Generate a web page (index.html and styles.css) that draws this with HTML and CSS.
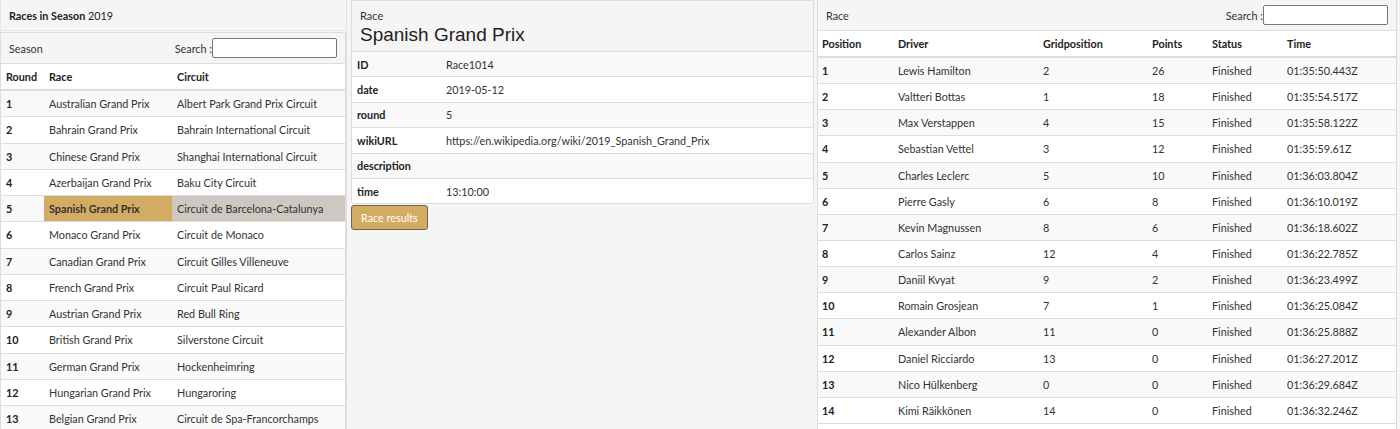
FILE: index.html
```html
<!DOCTYPE html>
<html>
<head>
<meta charset="utf-8">
<link rel="stylesheet" href="styles.css">
</head>
<body>
<div class="page">
  <section class="col col-left">
    <div class="panel-head"><b>Races in Season</b> 2019</div>
    <div class="card">
      <div class="bar">
        <span>Season</span>
        <label class="search">Search :<input type="text"></label>
      </div>
      <table class="grid races">
        <thead><tr><th class="c-round">Round</th><th class="c-race">Race</th><th>Circuit</th></tr></thead>
        <tbody>
          <tr><td>1</td><td>Australian Grand Prix</td><td>Albert Park Grand Prix Circuit</td></tr>
          <tr><td>2</td><td>Bahrain Grand Prix</td><td>Bahrain International Circuit</td></tr>
          <tr><td>3</td><td>Chinese Grand Prix</td><td>Shanghai International Circuit</td></tr>
          <tr><td>4</td><td>Azerbaijan Grand Prix</td><td>Baku City Circuit</td></tr>
          <tr class="selected"><td>5</td><td class="sel-main">Spanish Grand Prix</td><td class="sel-sub">Circuit de Barcelona-Catalunya</td></tr>
          <tr><td>6</td><td>Monaco Grand Prix</td><td>Circuit de Monaco</td></tr>
          <tr><td>7</td><td>Canadian Grand Prix</td><td>Circuit Gilles Villeneuve</td></tr>
          <tr><td>8</td><td>French Grand Prix</td><td>Circuit Paul Ricard</td></tr>
          <tr><td>9</td><td>Austrian Grand Prix</td><td>Red Bull Ring</td></tr>
          <tr><td>10</td><td>British Grand Prix</td><td>Silverstone Circuit</td></tr>
          <tr><td>11</td><td>German Grand Prix</td><td>Hockenheimring</td></tr>
          <tr><td>12</td><td>Hungarian Grand Prix</td><td>Hungaroring</td></tr>
          <tr><td>13</td><td>Belgian Grand Prix</td><td>Circuit de Spa-Francorchamps</td></tr>
        </tbody>
      </table>
    </div>
  </section>

  <section class="col col-mid">
    <div class="detail">
      <div class="detail-head">
        <div class="small">Race</div>
        <div class="title">Spanish Grand Prix</div>
      </div>
      <table class="grid props">
        <tbody>
          <tr><td class="c-key">ID</td><td>Race1014</td></tr>
          <tr><td class="c-key">date</td><td>2019-05-12</td></tr>
          <tr><td class="c-key">round</td><td>5</td></tr>
          <tr><td class="c-key">wikiURL</td><td>https://en.wikipedia.org/wiki/2019_Spanish_Grand_Prix</td></tr>
          <tr><td class="c-key">description</td><td></td></tr>
          <tr><td class="c-key">time</td><td>13:10:00</td></tr>
        </tbody>
      </table>
    </div>
    <button class="btn">Race results</button>
  </section>

  <section class="col col-right">
    <div class="bar bar-right">
      <span>Race</span>
      <label class="search">Search :<input type="text"></label>
    </div>
    <table class="grid results">
      <thead><tr><th class="c-pos">Position</th><th class="c-drv">Driver</th><th class="c-grid">Gridposition</th><th class="c-pts">Points</th><th class="c-st">Status</th><th>Time</th></tr></thead>
      <tbody>
        <tr><td>1</td><td>Lewis Hamilton</td><td>2</td><td>26</td><td>Finished</td><td>01:35:50.443Z</td></tr>
        <tr><td>2</td><td>Valtteri Bottas</td><td>1</td><td>18</td><td>Finished</td><td>01:35:54.517Z</td></tr>
        <tr><td>3</td><td>Max Verstappen</td><td>4</td><td>15</td><td>Finished</td><td>01:35:58.122Z</td></tr>
        <tr><td>4</td><td>Sebastian Vettel</td><td>3</td><td>12</td><td>Finished</td><td>01:35:59.61Z</td></tr>
        <tr><td>5</td><td>Charles Leclerc</td><td>5</td><td>10</td><td>Finished</td><td>01:36:03.804Z</td></tr>
        <tr><td>6</td><td>Pierre Gasly</td><td>6</td><td>8</td><td>Finished</td><td>01:36:10.019Z</td></tr>
        <tr><td>7</td><td>Kevin Magnussen</td><td>8</td><td>6</td><td>Finished</td><td>01:36:18.602Z</td></tr>
        <tr><td>8</td><td>Carlos Sainz</td><td>12</td><td>4</td><td>Finished</td><td>01:36:22.785Z</td></tr>
        <tr><td>9</td><td>Daniil Kvyat</td><td>9</td><td>2</td><td>Finished</td><td>01:36:23.499Z</td></tr>
        <tr><td>10</td><td>Romain Grosjean</td><td>7</td><td>1</td><td>Finished</td><td>01:36:25.084Z</td></tr>
        <tr><td>11</td><td>Alexander Albon</td><td>11</td><td>0</td><td>Finished</td><td>01:36:25.888Z</td></tr>
        <tr><td>12</td><td>Daniel Ricciardo</td><td>13</td><td>0</td><td>Finished</td><td>01:36:27.201Z</td></tr>
        <tr><td>13</td><td>Nico Hülkenberg</td><td>0</td><td>0</td><td>Finished</td><td>01:36:29.684Z</td></tr>
        <tr><td>14</td><td>Kimi Räikkönen</td><td>14</td><td>0</td><td>Finished</td><td>01:36:32.246Z</td></tr>
      </tbody>
    </table>
  </section>
</div>
</body>
</html>
```

FILE: styles.css
```css
html, body {
  margin: 0;
  padding: 0;
  background: #f5f5f5;
  font-family: "Lato", "Noto Sans", sans-serif;
  font-size: 10.8px;
  color: #333;
}
.page {
  display: flex;
  align-items: flex-start;
  height: 429px;
  overflow: hidden;
}
.col { box-sizing: border-box; flex: none; }
.col-left { width: 347px; }
.col-mid { width: 463px; margin-left: 4px; }
.col-right {
  width: 580px;
  margin-left: 3px;
  align-self: stretch;
  border-left: 1px solid #ddd;
  border-right: 1px solid #ddd;
  background: #fff;
}

.panel-head {
  height: 31px;
  box-sizing: border-box;
  padding: 9px 8px 0;
  border: 1px solid #e6e6e6;
  border-top: 0;
  background: #f5f5f5;
  color: #222;
}
.panel-head b { font-weight: 700; }

.card {
  margin-top: 1px;
  border: 1px solid #ddd;
  border-right-width: 2px;
  background: #fff;
}
.bar {
  display: flex;
  align-items: center;
  justify-content: space-between;
  height: 31px;
  box-sizing: border-box;
  padding: 0 8px;
  background: #f5f5f5;
  border-bottom: 1px solid #ddd;
}
.search { display: flex; align-items: center; }
.search input {
  width: 125px;
  height: 20px;
  box-sizing: border-box;
  margin: 0;
  border: 1px solid #767676;
  border-radius: 2px;
  background: #fff;
  padding: 0 3px;
}

.grid {
  width: 100%;
  border-collapse: collapse;
}
.grid th {
  text-align: left;
  font-weight: 700;
  color: #222;
  height: 24px;
  padding: 0 5px;
  border-bottom: 2px solid #ddd;
  background: #fff;
}
.grid td {
  height: 25.25px;
  padding: 0 5px;
  border-top: 1px solid #ddd;
  white-space: nowrap;
}
.grid tbody tr:nth-child(odd) td { background: #f9f9f9; }
.grid tbody tr:nth-child(even) td { background: #fff; }
.grid td:first-child { font-weight: 700; color: #222; }

.races th { height: 25px; }
.races .c-round { width: 33px; }
.races .c-race { width: 118px; }
.races tr.selected td.sel-main { background: #d4ab63; font-weight: 700; }
.races tr.selected td.sel-sub { background: #cdc9c1; }

.detail {
  background: #fff;
  border: 1px solid #ddd;
  border-radius: 0 0 4px 4px;
  overflow: hidden;
}
.detail-head {
  height: 51px;
  box-sizing: border-box;
  padding: 9px 8px 0;
  background: #f5f5f5;
  border-bottom: 1px solid #ddd;
}
.detail-head .small { font-size: 11px; color: #333; line-height: 12px; }
.detail-head .title {
  font-family: "Liberation Sans", Arial, sans-serif;
  font-size: 19px;
  line-height: 22px;
  margin-top: 2px;
  color: #222;
}
.props td { height: 24.4px; }
.props tbody tr:first-child td { border-top: 0; }
.props .c-key { width: 79px; }

.btn {
  margin-top: 1px;
  height: 25px;
  padding: 0 9px;
  font-family: inherit;
  font-size: 10.8px;
  color: #fff;
  background: #d4ab63;
  border: 1px solid #6b6456;
  border-radius: 3px;
}

.bar-right { height: 31px; padding: 0 8px 0 8px; }
.results th, .results td { padding: 0 4px; }
.results th { height: 25px; }
.results td { height: 25.15px; }
.results tbody tr:last-child td { border-bottom: 1px solid #ddd; }
.results .c-pos { width: 68px; }
.results .c-drv { width: 137px; }
.results .c-grid { width: 101px; }
.results .c-pts { width: 52px; }
.results .c-st { width: 67px; }
```
